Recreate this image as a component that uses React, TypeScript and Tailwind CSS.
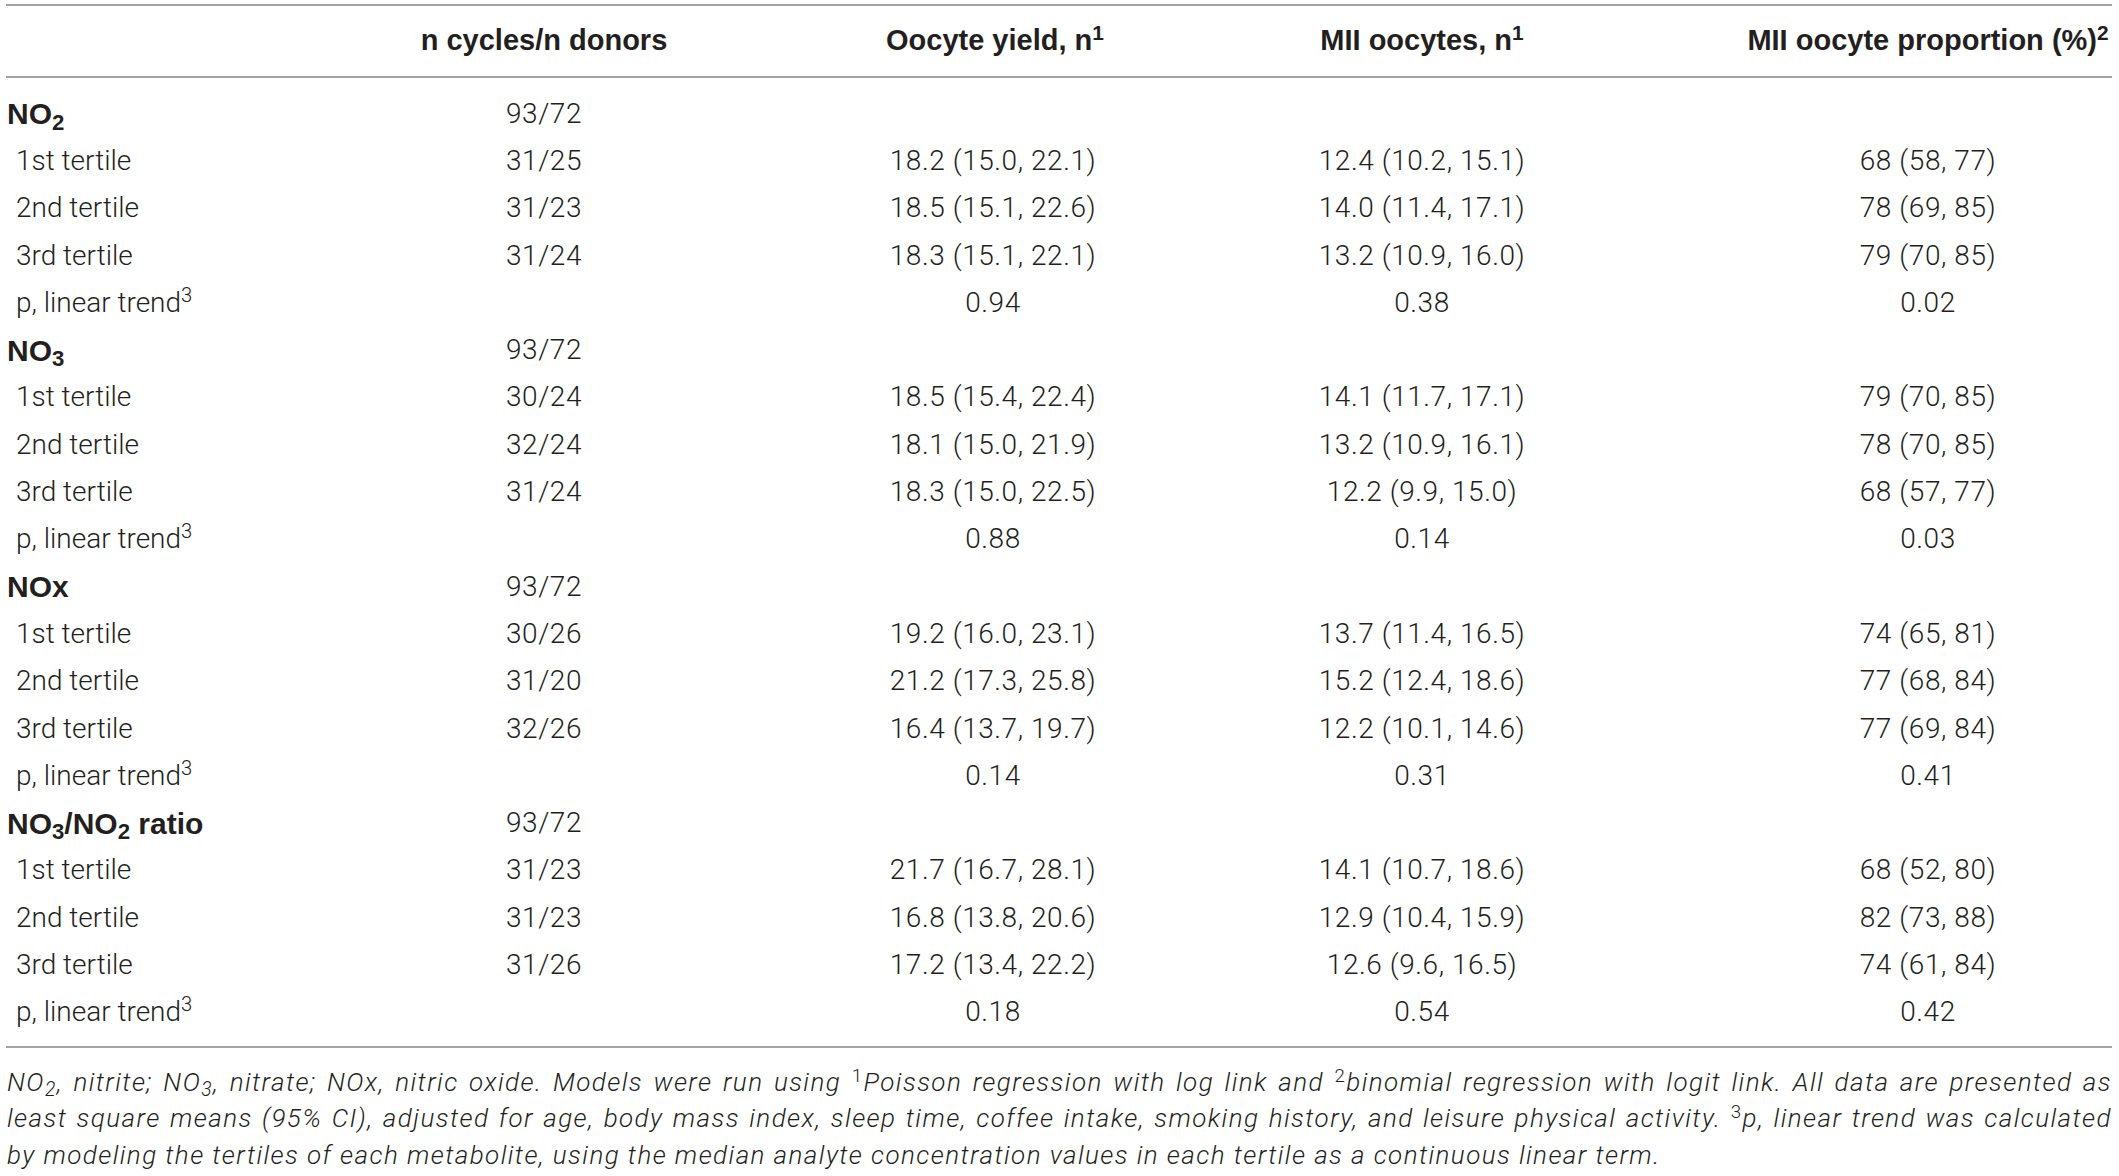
import type { ReactNode } from "react";

type Row = { label: ReactNode; n?: string; vals?: string[]; group?: boolean };

const sub = (t: string) => <sub className="text-[0.74em]">{t}</sub>;
const sup = (t: string) => <sup className="text-[0.72em]">{t}</sup>;

function group(
  label: ReactNode,
  tertiles: { n: string; vals: string[] }[],
  trend: string[]
): Row[] {
  return [
    { label, n: "93/72", group: true },
    { label: "1st tertile", ...tertiles[0] },
    { label: "2nd tertile", ...tertiles[1] },
    { label: "3rd tertile", ...tertiles[2] },
    { label: <>p, linear trend{sup("3")}</>, vals: trend },
  ];
}

const rows: Row[] = [
  ...group(
    <>NO{sub("2")}</>,
    [
      { n: "31/25", vals: ["18.2 (15.0, 22.1)", "12.4 (10.2, 15.1)", "68 (58, 77)"] },
      { n: "31/23", vals: ["18.5 (15.1, 22.6)", "14.0 (11.4, 17.1)", "78 (69, 85)"] },
      { n: "31/24", vals: ["18.3 (15.1, 22.1)", "13.2 (10.9, 16.0)", "79 (70, 85)"] },
    ],
    ["0.94", "0.38", "0.02"]
  ),
  ...group(
    <>NO{sub("3")}</>,
    [
      { n: "30/24", vals: ["18.5 (15.4, 22.4)", "14.1 (11.7, 17.1)", "79 (70, 85)"] },
      { n: "32/24", vals: ["18.1 (15.0, 21.9)", "13.2 (10.9, 16.1)", "78 (70, 85)"] },
      { n: "31/24", vals: ["18.3 (15.0, 22.5)", "12.2 (9.9, 15.0)", "68 (57, 77)"] },
    ],
    ["0.88", "0.14", "0.03"]
  ),
  ...group(
    "NOx",
    [
      { n: "30/26", vals: ["19.2 (16.0, 23.1)", "13.7 (11.4, 16.5)", "74 (65, 81)"] },
      { n: "31/20", vals: ["21.2 (17.3, 25.8)", "15.2 (12.4, 18.6)", "77 (68, 84)"] },
      { n: "32/26", vals: ["16.4 (13.7, 19.7)", "12.2 (10.1, 14.6)", "77 (69, 84)"] },
    ],
    ["0.14", "0.31", "0.41"]
  ),
  ...group(
    <>NO{sub("3")}/NO{sub("2")} ratio</>,
    [
      { n: "31/23", vals: ["21.7 (16.7, 28.1)", "14.1 (10.7, 18.6)", "68 (52, 80)"] },
      { n: "31/23", vals: ["16.8 (13.8, 20.6)", "12.9 (10.4, 15.9)", "82 (73, 88)"] },
      { n: "31/26", vals: ["17.2 (13.4, 22.2)", "12.6 (9.6, 16.5)", "74 (61, 84)"] },
    ],
    ["0.18", "0.54", "0.42"]
  ),
];

const cols = "grid grid-cols-[196px_684px_214px_644px_368px] items-center";

export default function App() {
  return (
    <div className="min-h-screen bg-white text-[#231f20] font-['Roboto','Liberation_Sans',sans-serif]">
      <div className="ml-[6px] pt-[4px] w-[2106px]">
        {/* header */}
        <div className={`${cols} h-[74px] border-y-2 border-[#a3a3a3] font-['Liberation_Sans',sans-serif] font-bold text-[29px] whitespace-nowrap`}>
          <div />
          <div className="text-center">n cycles/n donors</div>
          <div className="text-center">Oocyte yield, n{sup("1")}</div>
          <div className="text-center">MII oocytes, n{sup("1")}</div>
          <div className="text-center">MII oocyte proportion (%){sup("2")}</div>
        </div>

        {/* body */}
        <div className="pt-[12px] pb-[10px] border-b-2 border-[#a3a3a3] font-light text-[28px] tracking-[0.02em]">
          {rows.map((r, i) => (
            <div key={i} className={`${cols} h-[47.3px] whitespace-nowrap`}>
              {r.group ? (
                <div className="pl-[1px] font-['Liberation_Sans',sans-serif] font-bold text-[30px] tracking-normal">
                  {r.label}
                </div>
              ) : (
                <div className="pl-[10px] tracking-normal">{r.label}</div>
              )}
              <div className="text-center">{r.n}</div>
              {[0, 1, 2].map((k) => (
                <div key={k} className="text-center">
                  {r.vals?.[k]}
                </div>
              ))}
            </div>
          ))}
        </div>

        {/* footnote */}
        <div className="pt-[16px] pl-[1px] italic font-light text-[26px] tracking-[0.055em] leading-[36.5px]">
          <p className="text-justify [text-align-last:justify]">
            NO{sub("2")}, nitrite; NO{sub("3")}, nitrate; NOx, nitric oxide. Models were run using{" "}
            <span className="not-italic">{sup("1")}</span>Poisson regression with log link and{" "}
            <span className="not-italic">{sup("2")}</span>binomial regression with logit link. All data are presented as
          </p>
          <p className="text-justify [text-align-last:justify]">
            least square means (95% CI), adjusted for age, body mass index, sleep time, coffee intake, smoking history,
            and leisure physical activity. <span className="not-italic">{sup("3")}</span>p, linear trend was calculated
          </p>
          <p>
            by modeling the tertiles of each metabolite, using the median analyte concentration values in each tertile
            as a continuous linear term.
          </p>
        </div>
      </div>
    </div>
  );
}
